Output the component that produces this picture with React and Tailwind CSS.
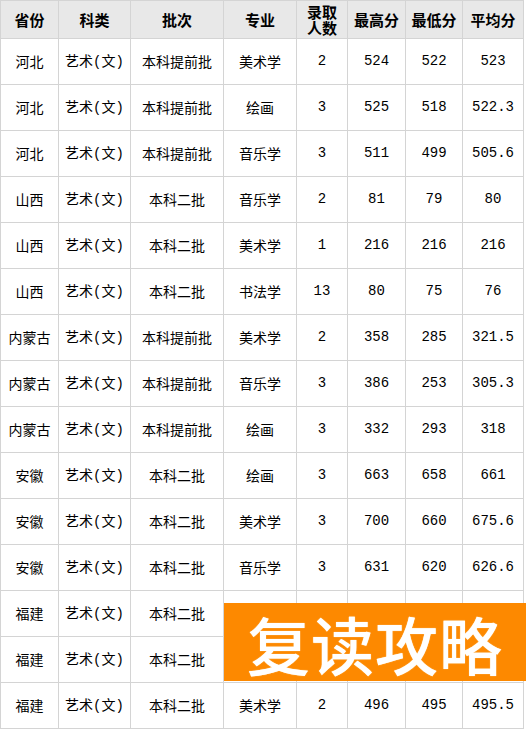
import React from "react";

const cols = [58, 72, 93, 73, 51, 58, 57, 61];

const headers = ["省份", "科类", "批次", "专业", "录取\n人数", "最高分", "最低分", "平均分"];

const rows = [
  ["河北", "艺术(文)", "本科提前批", "美术学", "2", "524", "522", "523"],
  ["河北", "艺术(文)", "本科提前批", "绘画", "3", "525", "518", "522.3"],
  ["河北", "艺术(文)", "本科提前批", "音乐学", "3", "511", "499", "505.6"],
  ["山西", "艺术(文)", "本科二批", "音乐学", "2", "81", "79", "80"],
  ["山西", "艺术(文)", "本科二批", "美术学", "1", "216", "216", "216"],
  ["山西", "艺术(文)", "本科二批", "书法学", "13", "80", "75", "76"],
  ["内蒙古", "艺术(文)", "本科提前批", "美术学", "2", "358", "285", "321.5"],
  ["内蒙古", "艺术(文)", "本科提前批", "音乐学", "3", "386", "253", "305.3"],
  ["内蒙古", "艺术(文)", "本科提前批", "绘画", "3", "332", "293", "318"],
  ["安徽", "艺术(文)", "本科二批", "绘画", "3", "663", "658", "661"],
  ["安徽", "艺术(文)", "本科二批", "美术学", "3", "700", "660", "675.6"],
  ["安徽", "艺术(文)", "本科二批", "音乐学", "3", "631", "620", "626.6"],
  ["福建", "艺术(文)", "本科二批", "", "", "", "", ""],
  ["福建", "艺术(文)", "本科二批", "", "", "", "", ""],
  ["福建", "艺术(文)", "本科二批", "美术学", "2", "496", "495", "495.5"],
];

// 科类: 括号用等宽字体，宽度接近原图
function Cell({ text }) {
  if (text === "艺术(文)") {
    return (
      <>
        艺术<span className="font-['Liberation_Mono',monospace]">(</span>文
        <span className="font-['Liberation_Mono',monospace]">)</span>
      </>
    );
  }
  return text;
}

export default function App() {
  return (
    <div className="relative w-[526px] h-[731px] overflow-hidden bg-white">
      <table
        className="table-fixed border-collapse w-[524px] text-black"
        style={{ fontFamily: '"Noto Sans CJK SC", "Liberation Sans", sans-serif' }}
      >
        <colgroup>
          {cols.map((w, i) => (
            <col key={i} style={{ width: w }} />
          ))}
        </colgroup>
        <thead>
          <tr className="h-[38px] bg-[#e8e8e8]">
            {headers.map((h) => (
              <th
                key={h}
                className="border border-[#d4d4d4] p-0 text-[15px] font-bold leading-[16px] whitespace-pre-line text-center"
              >
                {h}
              </th>
            ))}
          </tr>
        </thead>
        <tbody>
          {rows.map((r, i) => (
            <tr key={i} className="h-[46px]">
              {r.map((c, j) => (
                <td
                  key={j}
                  className={`border border-[#d4d4d4] p-0 text-center text-[14px] ${
                    j >= 4 ? "font-['Liberation_Mono',monospace]" : ""
                  }`}
                >
                  <Cell text={c} />
                </td>
              ))}
            </tr>
          ))}
        </tbody>
      </table>

      {/* 水印条 */}
      <div className="absolute left-[224px] top-[603px] w-[302px] h-[78px] bg-[#fd8900] flex items-center justify-center">
        <span
          className="text-white text-[63px] font-medium leading-none tracking-[1px] [text-shadow:0_0_1px_#fff3d9]"
          style={{ fontFamily: '"Noto Sans CJK SC", sans-serif' }}
        >
          复读攻略
        </span>
      </div>
    </div>
  );
}
